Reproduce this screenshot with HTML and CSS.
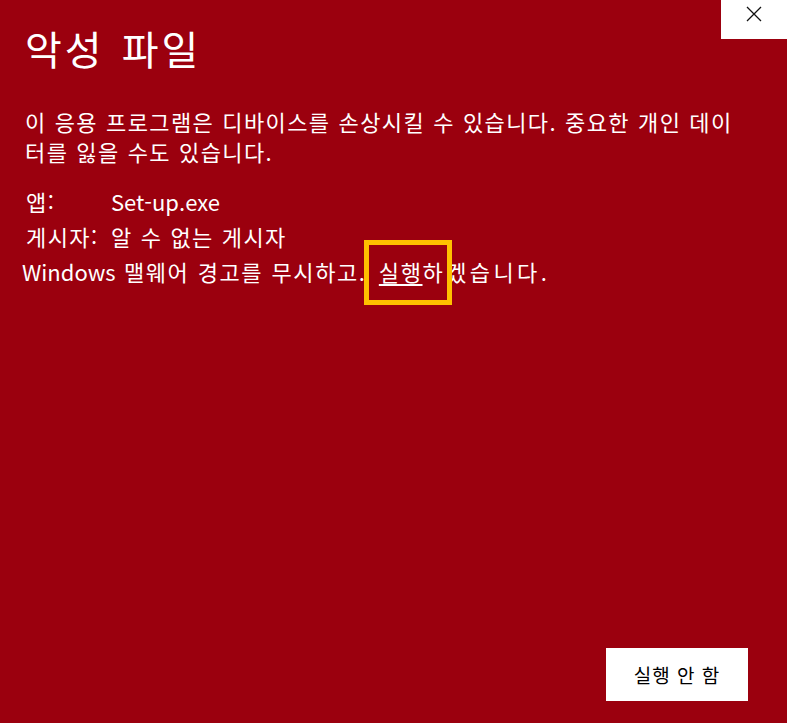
FILE: index.html
```html
<!DOCTYPE html>
<html lang="ko">
<head>
<meta charset="utf-8">
<title>악성 파일</title>
<link rel="stylesheet" href="styles.css">
</head>
<body>
<div class="window">
  <div class="top">
    <h1 class="title">악성 파일</h1>
    <button class="close" aria-label="닫기">
      <svg width="16" height="16" viewBox="0 0 16 16"><path d="M1 1 L15 15 M15 1 L1 15" stroke="#111" stroke-width="1.3" fill="none"/></svg>
    </button>
  </div>
  <div class="content">
    <p class="desc">이 응용 프로그램은 디바이스를 손상시킬 수 있습니다. 중요한 개인 데이터를 잃을 수도 있습니다.</p>
    <div class="info">
      <span class="label">앱:</span><span class="value en">Set-up.exe</span>
      <span class="label">게시자:</span><span class="value">알 수 없는 게시자</span>
    </div>
    <p class="override"><span class="en">Windows</span> 맬웨어 경고를 무시하고. <span class="run">실행</span><span class="tail">하겠습니다.</span></p>
  </div>
  <div class="footer">
    <button class="dont-run">실행 안 함</button>
  </div>
</div>
</body>
</html>
```
FILE: styles.css
```css
html, body {
  margin: 0;
  padding: 0;
}
body {
  background: #9b000e;
  color: #ffffff;
  font-family: "Noto Sans CJK KR", "Noto Sans", sans-serif;
}
.window {
  height: 100vh;
  display: flex;
  flex-direction: column;
}
.top {
  display: grid;
  grid-template-columns: 1fr auto;
  align-items: start;
}
.title {
  margin: 24px 0 0 25px;
  font-size: 40px;
  font-weight: 400;
  line-height: 48px;
  letter-spacing: 3px;
  word-spacing: 3px;
}
.close {
  width: 66px;
  height: 39px;
  background: #ffffff;
  border: 0;
  padding: 6px 0 0 0;
  margin: 0;
  display: flex;
  justify-content: center;
  align-items: flex-start;
}
.content {
  padding: 0 25px;
  font-size: 22px;
  line-height: 30px;
  letter-spacing: 1.4px;
  word-spacing: 0.5px;
}
.en {
  letter-spacing: 0;
}
.desc {
  margin: 34px 0 0 0;
  max-width: 718px;
}
.info {
  margin-top: 20px;
  display: grid;
  grid-template-columns: 85px 1fr;
  row-gap: 5px;
  padding-left: 1px;
}
.override {
  margin: 5px 0 0 -3px;
  letter-spacing: 1.6px;
}
.run {
  position: relative;
  margin-left: 4px;
  text-decoration: underline;
  text-decoration-thickness: 2px;
  text-underline-offset: 3px;
}
.run::after {
  content: "";
  position: absolute;
  left: -15px;
  top: -15px;
  width: 88px;
  height: 65px;
  border: 5px solid #ffc000;
  box-sizing: border-box;
}
.tail {
  letter-spacing: 3.4px;
}
.footer {
  margin-top: auto;
  display: flex;
  justify-content: flex-end;
  padding: 0 39px 22px 0;
}
.dont-run {
  width: 142px;
  height: 53px;
  background: #ffffff;
  color: #000000;
  border: 0;
  font-family: "Noto Sans CJK KR", sans-serif;
  font-size: 19px;
  letter-spacing: 1px;
  padding: 0;
}
```
